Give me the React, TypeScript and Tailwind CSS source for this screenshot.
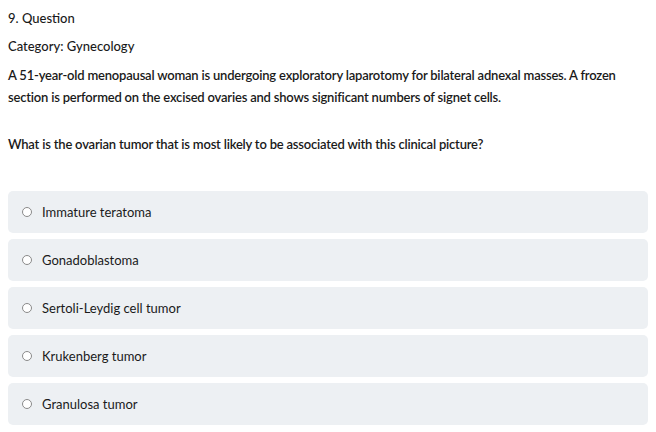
import React from 'react'

const options = [
  'Immature teratoma',
  'Gonadoblastoma',
  'Sertoli-Leydig cell tumor',
  'Krukenberg tumor',
  'Granulosa tumor',
]

export default function App() {
  return (
    <div className="w-[656px] h-[432px] bg-white text-[#1a1a1a] px-2 pt-[9px]" style={{ fontFamily: 'Lato, "Open Sans", sans-serif' }}>
      <div className="text-[13px] font-medium leading-[18px]">9. Question</div>
      <div className="text-[13px] font-medium leading-[18px] mt-[10px]">Category: Gynecology</div>
      <p className="text-[13px] font-semibold leading-[22px] tracking-[-0.2px] mt-[9px] w-[630px]">
        A 51-year-old menopausal woman is undergoing exploratory laparotomy for bilateral adnexal masses. A frozen section is performed on the excised ovaries and shows significant numbers of signet cells.
      </p>
      <p className="text-[13px] font-semibold leading-[22px] tracking-[-0.2px] mt-[25px]">
        What is the ovarian tumor that is most likely to be associated with this clinical picture?
      </p>
      <div className="flex flex-col gap-[6px] mt-[36px]">
        {options.map((o) => (
          <label key={o} className="flex items-center h-[42px] rounded-[5px] bg-[#edf0f3] pl-[14px] w-[640px]">
            <span className="w-[10px] h-[10px] rounded-full border border-[#8a8a8a] bg-white"></span>
            <span className="ml-[10px] text-[13px] leading-none">{o}</span>
          </label>
        ))}
      </div>
    </div>
  )
}
